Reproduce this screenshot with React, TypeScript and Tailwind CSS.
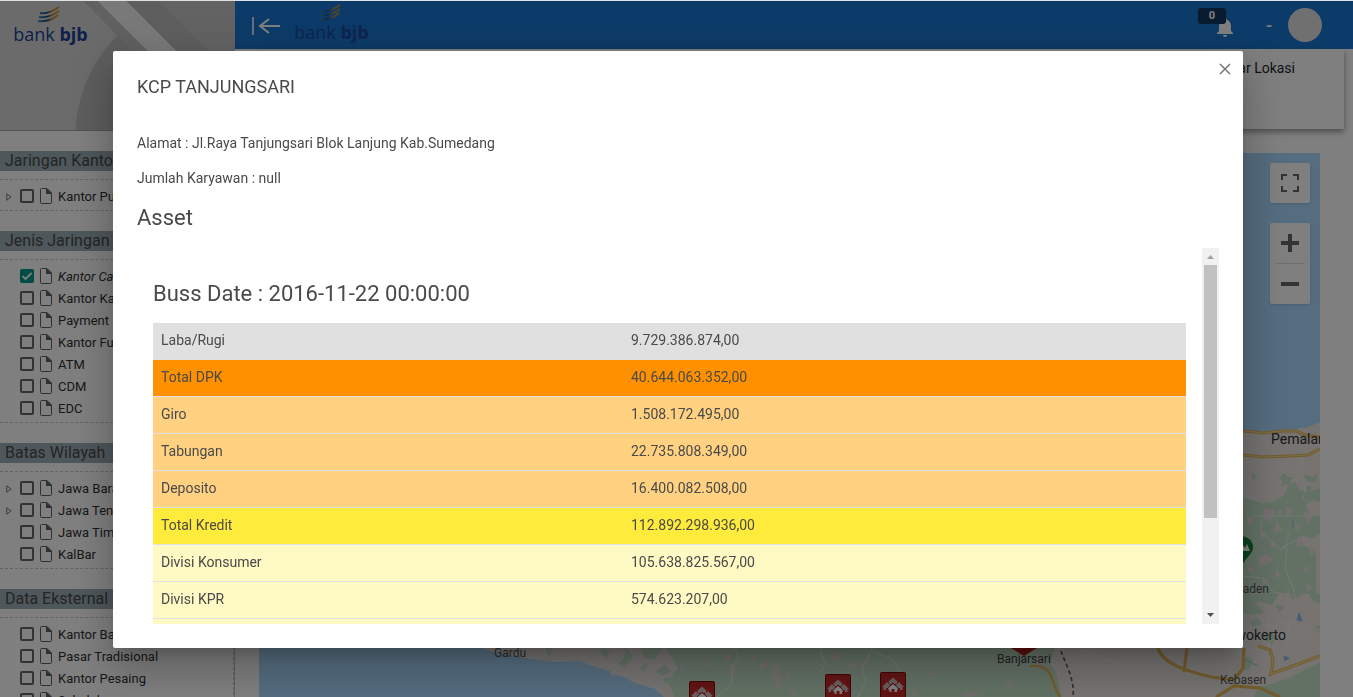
import React from "react";
import { MdNotifications } from "react-icons/md";

type TreeItem = { label: string; expandable?: boolean; checked?: boolean };
type TreeSection = { title: string; items: TreeItem[] };

const sections: TreeSection[] = [
  { title: "Jaringan Kantor", items: [{ label: "Kantor Pusat", expandable: true }] },
  {
    title: "Jenis Jaringan",
    items: [
      { label: "Kantor Cabang", checked: true },
      { label: "Kantor Kas" },
      { label: "Payment Point" },
      { label: "Kantor Fungsional" },
      { label: "ATM" },
      { label: "CDM" },
      { label: "EDC" },
    ],
  },
  {
    title: "Batas Wilayah",
    items: [
      { label: "Jawa Barat", expandable: true },
      { label: "Jawa Tengah", expandable: true },
      { label: "Jawa Timur" },
      { label: "KalBar" },
    ],
  },
  {
    title: "Data Eksternal",
    items: [
      { label: "Kantor Bank" },
      { label: "Pasar Tradisional" },
      { label: "Kantor Pesaing" },
      { label: "Sekolah" },
    ],
  },
];

const rows = [
  { name: "Laba/Rugi", value: "9.729.386.874,00", tone: "bg-[#e0e0e0]" },
  { name: "Total DPK", value: "40.644.063.352,00", tone: "bg-[#ff9100]" },
  { name: "Giro", value: "1.508.172.495,00", tone: "bg-[#ffd180]" },
  { name: "Tabungan", value: "22.735.808.349,00", tone: "bg-[#ffd180]" },
  { name: "Deposito", value: "16.400.082.508,00", tone: "bg-[#ffd180]" },
  { name: "Total Kredit", value: "112.892.298.936,00", tone: "bg-[#ffeb3b]" },
  { name: "Divisi Konsumer", value: "105.638.825.567,00", tone: "bg-[#fff9c4]" },
  { name: "Divisi KPR", value: "574.623.207,00", tone: "bg-[#fff9c4]" },
  { name: "Divisi Mikro", value: "6.679.650.162,00", tone: "bg-[#fff9c4]" },
];

function Logo() {
  return (
    <div className="flex w-[73px] flex-col items-center text-[#1c3f94]">
      <svg width="22" height="17" viewBox="0 0 22 17" fill="none" strokeWidth="2" className="mr-1" aria-hidden="true">
        <defs>
          <linearGradient id="swoosh" x1="0" y1="0" x2="22" y2="0" gradientUnits="userSpaceOnUse">
            <stop offset="0" stopColor="#2a95c0" />
            <stop offset="0.4" stopColor="#2a4780" />
            <stop offset="0.65" stopColor="#b58a4a" />
            <stop offset="1" stopColor="#e09a10" />
          </linearGradient>
        </defs>
        <path d="M2 7 C9 8 14 6 21 1" stroke="url(#swoosh)" />
        <path d="M1 11 C8 12 14 10 21 5" stroke="url(#swoosh)" />
        <path d="M0 15 C8 16 14 14 20 9" stroke="url(#swoosh)" />
      </svg>
      <div className="whitespace-nowrap font-['Open_Sans',sans-serif] text-[18px] leading-[22px]">
        bank <b>bjb</b>
      </div>
    </div>
  );
}

function FileIcon() {
  return (
    <svg width="12" height="16" viewBox="0 0 12 16" fill="none" className="mx-[6px] shrink-0 text-[#606060]" aria-hidden="true">
      <path d="M1.5 0.5 H7 L11.5 5 V14.5 Q11.5 15.5 10.5 15.5 H1.5 Q0.5 15.5 0.5 14.5 V1.5 Q0.5 0.5 1.5 0.5 Z" stroke="currentColor" />
      <path d="M6 0.500 H7 L11.500 5 V6 H6 Z" fill="currentColor" />
    </svg>
  );
}

function TreeRow({ item }: { item: TreeItem }) {
  return (
    <li className="flex h-[22px] items-center">
      <span className="flex w-5 shrink-0 pl-[6px] pt-[2px]">
        {item.expandable && (
          <svg width="6" height="8" viewBox="0 0 6 8" fill="none" stroke="#777" aria-hidden="true">
            <path d="M0.8 0.8 L5 4 L0.8 7.2 Z" />
          </svg>
        )}
      </span>
      <label className="flex items-center whitespace-nowrap text-[13px] text-[#313131]">
        <span className="relative flex shrink-0">
          <input
            type="checkbox"
            defaultChecked={item.checked}
            className="peer size-[14px] appearance-none rounded-[2px] border-2 border-[#666] checked:border-[#009688] checked:bg-[#009688]"
          />
          <svg width="14" height="14" viewBox="0 0 14 14" fill="none" stroke="#fff" strokeWidth="1.8" className="pointer-events-none absolute inset-0 hidden peer-checked:block" aria-hidden="true">
            <path d="M2.5 7 L5.5 10 L11.5 4" />
          </svg>
        </span>
        <FileIcon />
        <span className={item.checked ? "pt-[2px] italic" : "pt-[2px]"}>{item.label}</span>
      </label>
    </li>
  );
}

function Sidebar() {
  return (
    <aside className="flex w-[235px] shrink-0 flex-col border-r border-[#c4c4c4]">
      <div className="relative h-[130px] shrink-0 overflow-hidden border-b border-[#a8a8a8] bg-[#d6d6d6]">
        <svg className="absolute inset-0 size-full" viewBox="0 1 235 130" preserveAspectRatio="none" aria-hidden="true">
          <path d="M84 1 H235 V131 H76 C78 95 92 62 118 36 Z" fill="#c2c2c2" />
          <path d="M76 131 C78 95 92 62 118 36 L213 131 Z" fill="#bcbcbc" />
          <path d="M98 1 H127 L257 131 H228 Z" fill="#f2f2f2" />
          <path d="M127 1 H160 L290 131 H257 Z" fill="#bdbdbd" />
          <path d="M160 1 H235 V76 Z" fill="#c6c6c6" />
        </svg>
        <div className="relative pl-[14px] pt-[5px]">
          <Logo />
        </div>
      </div>
      <div className="flex flex-col gap-5 pt-5">
        {sections.map((s) => (
          <section key={s.title}>
            <h2 className="mb-2 h-5 bg-[#9caeb7] pl-[5px] text-[16px] leading-[19px] text-[#4a4a4a]">{s.title}</h2>
            <ul className="border-y border-r border-dashed border-[#c8c8c8] pb-[3px] pt-[5px]">
              {s.items.map((i) => (
                <TreeRow key={i.label} item={i} />
              ))}
            </ul>
          </section>
        ))}
      </div>
    </aside>
  );
}

function Header() {
  return (
    <header className="flex h-12 shrink-0 items-center bg-[#1976d2] text-white">
      <button type="button" aria-label="Tutup menu" className="ml-[17px] mt-[2px]">
        <svg width="29" height="18" viewBox="0 0 29 18" fill="none" stroke="currentColor" strokeWidth="2" aria-hidden="true">
          <path d="M1 0 V18" strokeWidth="1.6" />
          <path d="M28 9 H8 M17 2 L8 9 L17 16" />
        </svg>
      </button>
      <div className="mb-[3px] ml-[14px] opacity-80">
        <Logo />
      </div>
      <div className="ml-auto flex items-center pr-[31px]">
        <button type="button" aria-label="Notifikasi" className="relative mt-1">
          <MdNotifications size={24} />
          <span className="absolute -left-[15px] -top-[7px] h-4 w-7 rounded-[3px] bg-[#12365f] text-center text-[11px] font-bold leading-4">
            0
          </span>
        </button>
        <span className="ml-[29px] mr-4 pt-px text-[18px] font-medium">-</span>
        <span className="size-[34px] rounded-full bg-[#e0e0e0]" />
      </div>
    </header>
  );
}

const greenPatches =
  "M1251 470 l3 4 4 4 -6 2z M1279 478 l6 -5 3 4 5 0 -3 4 2 5 -6 -2 -5 2 2 -5z M1303 474 l10 3 5 -4 -2 9 -8 0z M1243 498 l18 4 10 1 12 -7 6 -11 6 -3 4 8 10 2 11 -4 v14 l-8 -2 -6 6 4 8 10 2 v18 l-8 4 -10 -2 -4 8 18 6 v46 l-12 -3 -10 6 -14 -6 -8 12 -14 -4 -10 14 -13 -6 z M1249 622 l9 -4 4 6 -8 4z M1246 608 l12 -3 6 8 -12 2z M1275 604 l10 3 -6 6z M1264 640 l6 -8 6 6 -4 6z M1290 678 l10 -6 20 -9 v34 h-66 l4 -10 16 -4z M1243 655 l10 4 -4 10 -6 2z M1308 590 l12 4 v10 l-8 -4z M1312 628 l8 -3 v8z M1307 485 l6 3 -6 3z";
const palePatches =
  "M1264 508 l12 2 -5 12 -8 -4z M1286 506 l8 5 -7 6z M1303 512 l11 3 -6 8z M1257 558 l9 -4 8 4 -6 6 -8 3z M1287 590 l5 5 -8 2z M1306 583 l9 4 -8 4z M1277 521 l6 9 -9 2z M1298 536 l6 8 -8 3z M1250 566 l5 4 -7 2z M1247 516 l8 4 -6 6z M1262 530 l5 6 -8 3z M1272 540 l5 6 -7 2z M1294 524 l7 2 -4 6z M1309 548 l7 3 -5 5z M1262 578 l7 3 -6 4z M1276 570 l5 6 -6 2z M1302 568 l7 -2 -2 7z M1251 590 l6 4 -6 3z M1284 512 l-6 4 1 -7z";

function VillageMarker({ x, y }: { x: number; y: number }) {
  return (
    <g transform={`translate(${x} ${y})`}>
      <rect x="0.5" y="0.5" width="25" height="30" rx="1" fill="#c62828" stroke="#7f0b0b" />
      <path d="M8 10 L13 5.500 L18 10 H17 V12 H9 V10Z M2 15 L7 10 L12 15 H10.500 V18 H8 V16 H6 V18 H3.500 V15Z M14 15 L19 10 L24 15 H22.500 V18 H20 V16 H18 V18 H15.500 V15Z" fill="#d6bcbc" />
      <path d="M7 17 L13 11 L19 17" fill="none" stroke="#a52222" />
      <path d="M8 16.500 L13 12 L18 16.500 H17 V20 H14.500 V17 H11.500 V20 H9.500 V16.500Z" fill="#fff" />
    </g>
  );
}

function MapDrawing() {
  return (
    <svg className="absolute inset-0 size-full" viewBox="259 153 1061 544" preserveAspectRatio="xMinYMin slice" aria-hidden="true">
      <rect x="259" y="153" width="1061" height="544" fill="#aadaff" />
      <path
        d="M480 648 L497 653 L530 659 L555 662 L580 661 L592 666 L610 671 L611 675 L622 676 L635 683 L655 689 L664 697 H1320 V422 L1308 427 L1297 429 L1280 430 L1262 431 L1243 431 V600 H480Z"
        fill="#ece7e3"
      />
      <path d="M545 648 l8 0 -4 10z M598 648 l12 3 -4 8z M625 648 l9 8 -11 10z M640 648 l22 0 -8 12 -9 -2z M618 664 l5 -6 6 2 -4 8z M640 668 l5 -6 3 4 -5 6z M655 672 l10 -8 6 8 -8 4z M662 680 l6 -4 1 9z M666 648 H1055 L1050 664 1056 672 1062 697 H674 L668 680 678 668z" fill="#c6e2c9" />
      <path
        d="M681 664 l4 4 -4 4z M707 658 l5 6 -6 2z M723 654 l10 2 -8 6z M731 664 l7 5 -6 10 -3 -6z M750 656 l8 -1 -6 8z M760 664 l10 -3 -8 10z M776 662 l6 16 -4 14 -5 -14z M787 670 l4 6 -6 4z M789 688 l8 3 -4 6z M800 656 l4 5 -5 0z M832 655 l8 -5 4 8 -12 4z M848 663 l12 -2 -6 8z M866 656 l5 3 -5 2z M926 673 l10 0 -1 2 -7 0z M952 670 l5 0 -2 3z M912 690 l6 3 -5 2z M960 694 l10 -3 14 3 -8 1 -8 2z M1006 682 l8 1 -8 5z M1036 650 l10 12 -8 4z"
        fill="#e0dad7"
      />
      <path d={greenPatches} fill="#c6e2c9" />
      <path d={palePatches} fill="#e6e0dd" />
      <g fill="none" stroke="#f4f2f0" strokeWidth="0.8">
        <path d="M735 648 l4 10 -6 8 -2 18 -14 13 M820 648 l5 16 -4 8 M872 648 l-4 10 -6 10 4 14 -8 15 M872 651 l20 8 8 12 M1084 650 l24 10 40 15 M1085 648 v45 M1085 676 h40 M1130 697 l16 -20" />
        <path d="M1303 455 l-2 20 4 14 -2 10 8 5 M1243 494 l22 10 M1253 516 h36 l26 0 M1261 518 l0 14 20 18 M1281 550 l4 -2 4 -14 M1287 548 l-2 20 8 20 4 16 M1304 536 l-22 12 M1243 576 l20 2 10 14 20 4 M1265 610 l6 28 -10 44 M1290 618 l-6 40 M1247 628 l40 -6 33 8 M1270 640 l50 -8" />
      </g>
      <g fill="none" stroke="#e4b75a" strokeWidth="3.2">
        <path d="M1243 431 L1264 433 1283 431 1297 431 1304 435 1320 437" />
        <path d="M1243 455 L1263 457 1290 456 1308 455 1320 449" />
        <path d="M1030 666 C1056 664 1050 684 1060 697" strokeWidth="2.4" />
        <path d="M1158 648 C1162 664 1190 672 1211 677 L1234 680 L1243 668 L1244 648" />
        <path d="M1187 648 L1184 672 M1258 646 L1270 650 1273 660 1271 674 L1320 656 M1216 697 L1234 686 1260 688 1280 697" />
      </g>
      <g fill="none" stroke="#f5dc9a" strokeWidth="1.2">
        <path d="M1243 455 L1263 457 1290 456 1308 455 1320 449 M1243 431 L1264 433 1283 431 1297 431 1304 435 1320 437" />
        <path d="M1258 646 L1270 650 1273 660 1271 674 L1320 656" />
      </g>
      <path d="M1061 651 C1066 665 1075 680 1073 697" fill="none" stroke="#5a5a5a" strokeWidth="1.6" strokeDasharray="4 3" />
      <path d="M1293 520 v8 M1299 613 l-2 7 5 1z M1284 656 l5 2 -4 3z M1246 660 l12 6" stroke="#8ab8e6" strokeWidth="0.8" fill="#8ab8e6" />
      <path d="M1240 536 C1248 536 1253 541 1253 547 C1253 554 1246 557 1243 564 C1236 557 1230 553 1230 547 C1230 541 1234 536 1240 536Z" fill="#17803d" />
      <path d="M1240 551 l3 -6 2 3 2 -4 3 7z" fill="#fff" />
      <path d="M1011 648 H1037 L1024 656Z" fill="#b71c1c" />
      <VillageMarker x={689} y={681} />
      <VillageMarker x={825} y={674} />
      <VillageMarker x={880} y={672} />
    </svg>
  );
}

function MapView() {
  return (
    <div className="relative min-h-0 flex-1 overflow-hidden text-[#333]">
      <MapDrawing />
      <span className="absolute left-[235px] top-[492px] text-[12px] leading-4 text-[#555]">Gardu</span>
      <span className="absolute left-[738px] top-[498px] text-[12px] leading-4 text-[#444]">Banjarsari</span>
      <span className="absolute left-[961px] top-[519px] text-[12px] leading-4 text-[#555]">Kebasen</span>
      <span className="absolute right-[51px] top-[428px] text-[12px] leading-4 text-[#555]">Baturraden</span>
      <span className="absolute right-[34px] top-[472px] text-[14px] leading-5">Purwokerto</span>
      <span className="absolute left-[1012px] top-[276px] text-[14px] leading-5">Pemalang</span>
      <div className="absolute right-[10px] top-[10px] flex flex-col gap-5 text-[#666]">
        <button type="button" aria-label="Layar penuh" className="flex size-10 items-center justify-center rounded-[2px] bg-white shadow">
          <svg width="18" height="18" viewBox="0 0 18 18" fill="none" stroke="currentColor" strokeWidth="2" aria-hidden="true">
            <path d="M1 6 V1 H6 M12 1 H17 V6 M17 12 V17 H12 M6 17 H1 V12" />
          </svg>
        </button>
        <div className="flex flex-col items-center rounded-[2px] bg-white shadow">
          <button type="button" aria-label="Perbesar" className="flex size-10 items-center justify-center">
            <svg width="18" height="18" viewBox="0 0 18 18" fill="currentColor" aria-hidden="true">
              <path d="M7 0 H11 V7 H18 V11 H11 V18 H7 V11 H0 V7 H7Z" />
            </svg>
          </button>
          <span className="h-px w-[30px] bg-[#e0e0e0]" />
          <button type="button" aria-label="Perkecil" className="flex size-10 items-center justify-center">
            <svg width="18" height="4" viewBox="0 0 18 4" fill="currentColor" aria-hidden="true">
              <path d="M0 0 H18 V4 H0Z" />
            </svg>
          </button>
        </div>
      </div>
    </div>
  );
}

function ScrollTrack() {
  return (
    <div className="flex w-[17px] shrink-0 flex-col bg-[#f1f1f1]" aria-hidden="true">
      <svg width="17" height="17" viewBox="0 0 17 17" className="shrink-0">
        <path d="M5 11 L8.500 7 L12 11Z" fill="#a3a3a3" />
      </svg>
      <div className="flex flex-1 flex-col px-[2px]">
        <div className="h-[74%] bg-[#c1c1c1]" />
      </div>
      <svg width="17" height="17" viewBox="0 0 17 17" className="shrink-0">
        <path d="M5 6 L8.500 10 L12 6Z" fill="#505050" />
      </svg>
    </div>
  );
}

function BranchDialog() {
  return (
    <div className="fixed inset-0 top-px flex items-start bg-black/50 pl-[113px] pr-[110px] pt-[50px]">
      <div
        role="dialog"
        aria-labelledby="branch-title"
        className="relative w-full rounded-[2px] bg-white p-6 text-[14px] text-[#4a4a4a] shadow-[0_11px_15px_-7px_rgba(0,0,0,0.2),0_24px_38px_3px_rgba(0,0,0,0.14),0_9px_46px_8px_rgba(0,0,0,0.12)]"
      >
        <button type="button" aria-label="Tutup" className="absolute right-3 top-3 text-[#757575]">
          <svg width="12" height="12" viewBox="0 0 12 12" stroke="currentColor" strokeWidth="1.5" aria-hidden="true">
            <path d="M1 1 L11 11 M11 1 L1 11" />
          </svg>
        </button>
        <h1 id="branch-title" className="text-[18px] leading-6">KCP TANJUNGSARI</h1>
        <p className="mt-[34px] leading-5">Alamat : Jl.Raya Tanjungsari Blok Lanjung Kab.Sumedang</p>
        <p className="mt-[15px] leading-5">Jumlah Karyawan : null</p>
        <h2 className="mt-4 text-[22px] leading-7">Asset</h2>
        <div className="mt-4 flex h-[376px]">
          <div className="min-w-0 flex-1 overflow-hidden px-4 pt-8">
            <h3 className="text-[22px] leading-7">Buss Date : 2016-11-22 00:00:00</h3>
            <table className="mt-[15px] w-full border-separate border-spacing-0 text-left">
              <tbody>
                {rows.map((r) => (
                  <tr key={r.name} className={`h-[37px] ${r.tone}`}>
                    <th scope="row" className="w-[45.5%] border-b border-[#dee2e6] px-2 pb-[2px] font-normal leading-5">{r.name}</th>
                    <td className="border-b border-[#dee2e6] px-2 pb-[2px] leading-5">{r.value}</td>
                  </tr>
                ))}
              </tbody>
            </table>
          </div>
          <ScrollTrack />
        </div>
      </div>
    </div>
  );
}

export default function App() {
  return (
    <div className="flex h-screen overflow-hidden border-t border-[#dee1e6] bg-white font-[Roboto,sans-serif]">
      <Sidebar />
      <main className="flex min-w-0 flex-1 flex-col">
        <Header />
        <div className="ml-6 mr-[9px] h-20 shrink-0 bg-white pr-[49px] pt-[7px] text-right text-[14px] leading-6 text-[#212529] shadow-[0_3px_6px_rgba(0,0,0,0.4)]">
          Daftar Lokasi
        </div>
        <div className="flex min-h-0 flex-1 flex-col pl-6 pr-[33px] pt-6">
          <MapView />
        </div>
      </main>
      <BranchDialog />
    </div>
  );
}
